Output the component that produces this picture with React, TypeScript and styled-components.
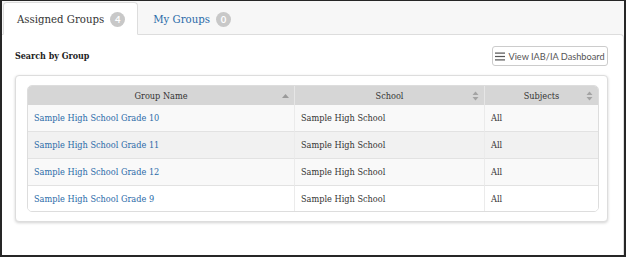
import * as React from 'react';
import styled, { createGlobalStyle } from 'styled-components';

const GlobalStyle = createGlobalStyle`
    html, body {
        margin: 0;
        padding: 0;
        background: #fff;
    }
    * {
        box-sizing: border-box;
    }
`;

type Group = { name: string; school: string; subjects: string };

const groups: Group[] = [
    { name: 'Sample High School Grade 10', school: 'Sample High School', subjects: 'All' },
    { name: 'Sample High School Grade 11', school: 'Sample High School', subjects: 'All' },
    { name: 'Sample High School Grade 12', school: 'Sample High School', subjects: 'All' },
    { name: 'Sample High School Grade 9', school: 'Sample High School', subjects: 'All' },
];

const rowColors = ['#f9f9f9', '#f1f1f1', '#f9f9f9', '#ffffff'];

const SortAsc = () => (
    <svg width="7" height="5" viewBox="0 0 7 5">
        <path d="M0 4.5 L3.5 0.5 L7 4.5 Z" fill="#9a9a9a" />
    </svg>
);

const SortBoth = () => (
    <svg width="7" height="10" viewBox="0 0 7 10">
        <path d="M0.5 4 L3.5 0.5 L6.5 4 Z" fill="#a3a3a3" />
        <path d="M0.5 6 L3.5 9.5 L6.5 6 Z" fill="#a3a3a3" />
    </svg>
);

const MenuIcon = () => (
    <svg width="10" height="9" viewBox="0 0 10 9">
        <rect x="0" y="0.5" width="10" height="1.2" fill="#555" />
        <rect x="0" y="3.9" width="10" height="1.2" fill="#555" />
        <rect x="0" y="7.3" width="10" height="1.2" fill="#555" />
    </svg>
);

const App = () => {
    return (
        <>
            <GlobalStyle />
            <StyledFrame>
                <StyledTabBar>
                    <StyledTab active>
                        Assigned Groups <StyledBadge>4</StyledBadge>
                    </StyledTab>
                    <StyledTab>
                        My Groups <StyledBadge>0</StyledBadge>
                    </StyledTab>
                </StyledTabBar>
                <StyledPane>
                    <StyledHeaderRow>
                        <StyledTitle>Search by Group</StyledTitle>
                        <StyledButton>
                            <MenuIcon />
                            View IAB/IA Dashboard
                        </StyledButton>
                    </StyledHeaderRow>
                    <StyledCard>
                        <StyledTable>
                            <thead>
                                <tr>
                                    <StyledTh width={267}>
                                        Group Name
                                        <StyledSort><SortAsc /></StyledSort>
                                    </StyledTh>
                                    <StyledTh width={190}>
                                        School
                                        <StyledSort><SortBoth /></StyledSort>
                                    </StyledTh>
                                    <StyledTh width={113}>
                                        Subjects
                                        <StyledSort><SortBoth /></StyledSort>
                                    </StyledTh>
                                </tr>
                            </thead>
                            <tbody>
                                {groups.map((g, i) => (
                                    <StyledRow key={g.name} bg={rowColors[i]}>
                                        <StyledTd>
                                            <StyledLink href="#">{g.name}</StyledLink>
                                        </StyledTd>
                                        <StyledTd>{g.school}</StyledTd>
                                        <StyledTd>{g.subjects}</StyledTd>
                                    </StyledRow>
                                ))}
                            </tbody>
                        </StyledTable>
                    </StyledCard>
                </StyledPane>
            </StyledFrame>
        </>
    );
};

export default App;

const serif = `"DejaVu Serif", "Liberation Serif", serif`;

const StyledFrame = styled.div`
    width: 626px;
    height: 257px;
    border: 2px solid #262626;
    border-top-width: 1px;
    background: #f7f7f7;
    display: flex;
    flex-direction: column;
    font-family: ${serif};
    font-stretch: condensed;
    color: #333;
    overflow: hidden;
`;

const StyledTabBar = styled.div`
    display: flex;
    align-items: flex-end;
    height: 34px;
    padding-left: 1px;
    margin-bottom: -1px;
    position: relative;
    z-index: 1;
`;

const StyledTab = styled.div<{ active?: boolean }>`
    display: flex;
    align-items: center;
    gap: 6px;
    height: 33px;
    padding: 1px 12px 0 13px;
    margin-right: 1px;
    border: 1px solid ${(p) => (p.active ? '#dddddd' : 'transparent')};
    border-bottom-color: ${(p) => (p.active ? '#ffffff' : 'transparent')};
    border-radius: 4px 4px 0 0;
    background: ${(p) => (p.active ? '#ffffff' : 'transparent')};
    color: ${(p) => (p.active ? '#333333' : '#2a6aa8')};
    font-size: 11.3px;
`;

const StyledBadge = styled.span`
    display: inline-flex;
    align-items: center;
    justify-content: center;
    width: 15px;
    height: 15px;
    border-radius: 8px;
    background: #c8c8c8;
    color: #fff;
    font-family: "Lato", "Liberation Sans", sans-serif;
    font-stretch: normal;
    font-weight: 700;
    font-size: 9.5px;
`;

const StyledPane = styled.div`
    flex: 1;
    background: #fff;
    border-top: 1px solid #dddddd;
    border-right: 1px solid #dddddd;
    border-top-right-radius: 4px;
    padding: 11px 15px 0 13px;
`;

const StyledHeaderRow = styled.div`
    display: flex;
    align-items: center;
    justify-content: space-between;
    height: 20px;
`;

const StyledTitle = styled.h2`
    margin: 0;
    font-size: 8.9px;
    font-weight: 700;
    color: #222;
`;

const StyledButton = styled.button`
    display: inline-flex;
    align-items: center;
    justify-content: center;
    gap: 3px;
    height: 20px;
    width: 116px;
    padding: 0;
    border: 1px solid #cccccc;
    border-radius: 3px;
    background: #fff;
    color: #555;
    font-family: "Lato", "Liberation Sans", sans-serif;
    font-stretch: normal;
    font-size: 9.2px;
    white-space: nowrap;
`;

const StyledCard = styled.div`
    margin-top: 9px;
    padding: 9px 10px 9px 11px;
    border: 1px solid #dddddd;
    border-radius: 4px;
    background: #fff;
    box-shadow: 0 1px 3px rgba(0, 0, 0, 0.18);
`;

const StyledTable = styled.table`
    width: 100%;
    border-collapse: separate;
    border-spacing: 0;
    border: 1px solid #dddddd;
    border-radius: 5px;
    overflow: hidden;
    table-layout: fixed;
    font-size: 9.1px;
`;

const StyledTh = styled.th<{ width: number }>`
    position: relative;
    width: ${(p) => p.width}px;
    height: 19px;
    padding: 0 6px;
    background: #d6d6d6;
    border-right: 1px solid #e6e6e6;
    font-weight: 400;
    color: #333;
    text-align: center;

    &:last-child {
        border-right: none;
    }
`;

const StyledSort = styled.span`
    position: absolute;
    right: 5px;
    top: 50%;
    transform: translateY(-50%);
    display: flex;
`;

const StyledRow = styled.tr<{ bg: string }>`
    background: ${(p) => p.bg};

    &:last-child td {
        border-bottom: none;
        height: 25px;
    }
`;

const StyledTd = styled.td`
    height: 27px;
    padding: 0 6px;
    border-bottom: 1px solid #e2e2e2;
    border-right: 1px solid #ebebeb;
    color: #333;
    white-space: nowrap;

    &:last-child {
        border-right: none;
    }
`;

const StyledLink = styled.a`
    color: #2a6aa8;
    text-decoration: none;
`;
